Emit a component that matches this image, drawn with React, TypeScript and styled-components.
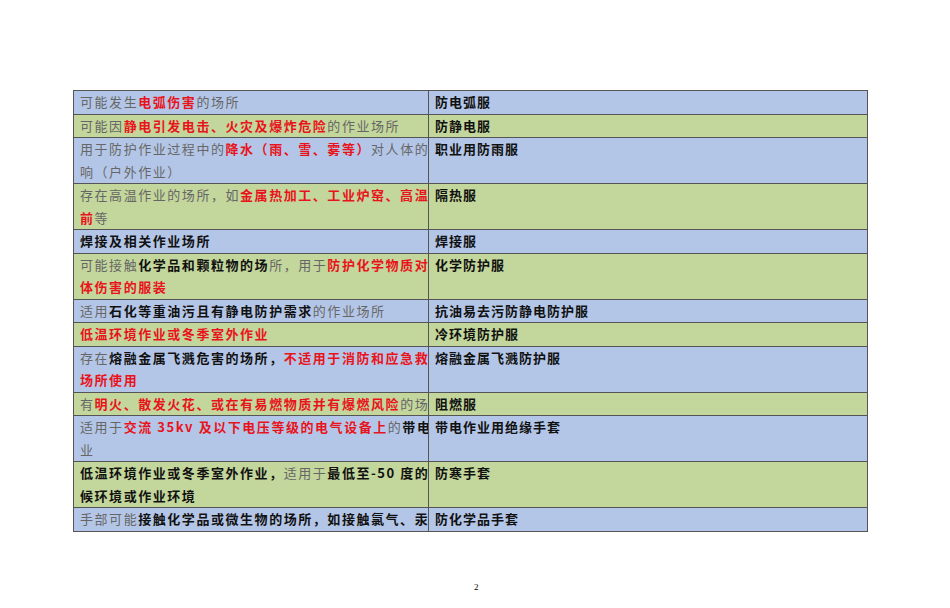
import React from "react";
import styled, { createGlobalStyle } from "styled-components";

const Global = createGlobalStyle`
  body { margin: 0; background: #fff; font-family: "Noto Sans CJK SC", "Liberation Serif", sans-serif; }
`;
const Page = styled.div`
  width: 950px; height: 608px; overflow: hidden; display: flex; flex-direction: column;
  padding: 90px 0 0 73px; box-sizing: border-box;
`;
const Table = styled.div`
  width: 795px; border: 1px solid #555; box-sizing: border-box;
`;
const Row = styled.div<{ $c: "b" | "g" }>`
  display: grid; grid-template-columns: 354px 1fr;
  background: ${p => (p.$c === "b" ? "#b4c6e7" : "#c3d69b")};
  & + & { border-top: 1px solid #555; }
`;
const Cell = styled.div`
  padding: 0 6px; font-size: 13px; line-height: 22.5px; letter-spacing: 1.55px; color: #666;
  white-space: nowrap; overflow: hidden;
  & + & { border-left: 1px solid #555; color: #111; font-weight: 700; letter-spacing: 1px; }
`;
const R = styled.span` color: #e8141c; font-weight: 700; `;
const K = styled.span` color: #111; font-weight: 700; `;
const Num = styled.div` margin: 50px 0 0 401px; font-size: 9px; font-family: "Liberation Serif", serif; `;

const rows: [("b" | "g"), React.ReactNode, string][] = [
  ["b", <>可能发生<R>电弧伤害</R>的场所</>, "防电弧服"],
  ["g", <>可能因<R>静电引发电击、火灾及爆炸危险</R>的作业场所</>, "防静电服"],
  ["b", <>用于防护作业过程中的<R>降水（雨、雪、雾等）</R>对人体的影<br />响（户外作业）</>, "职业用防雨服"],
  ["g", <>存在高温作业的场所，如<R>金属热加工、工业炉窑、高温炉<br />前</R>等</>, "隔热服"],
  ["b", <><K>焊接及相关作业场所</K></>, "焊接服"],
  ["g", <>可能接触<K>化学品和颗粒物的场</K>所，用于<R>防护化学物质对人<br />体伤害的服装</R></>, "化学防护服"],
  ["b", <>适用<K>石化等重油污且有静电防护需求</K>的作业场所</>, "抗油易去污防静电防护服"],
  ["g", <><R>低温环境作业或冬季室外作业</R></>, "冷环境防护服"],
  ["b", <>存在<K>熔融金属飞溅危害的场所，</K><R>不适用于消防和应急救援<br />场所使用</R></>, "熔融金属飞溅防护服"],
  ["g", <>有<R>明火、散发火花、或在有易燃物质并有爆燃风险</R>的场所</>, "阻燃服"],
  ["b", <>适用于<R>交流 35kv 及以下电压等级的电气设备上</R>的<K>带电</K>作<br />业</>, "带电作业用绝缘手套"],
  ["g", <><K>低温环境作业或冬季室外作业，</K>适用于<K>最低至-50 度的气<br />候环境或作业环境</K></>, "防寒手套"],
  ["b", <>手部可能<K>接触化学品或微生物的场所，如接触氯气、汞、</K></>, "防化学品手套"],
];

export default function App() {
  return (
    <Page>
      <Global />
      <Table>
        {rows.map(([c, l, r], i) => (
          <Row key={i} $c={c}>
            <Cell>{l}</Cell>
            <Cell>{r}</Cell>
          </Row>
        ))}
      </Table>
      <Num>2</Num>
    </Page>
  );
}
